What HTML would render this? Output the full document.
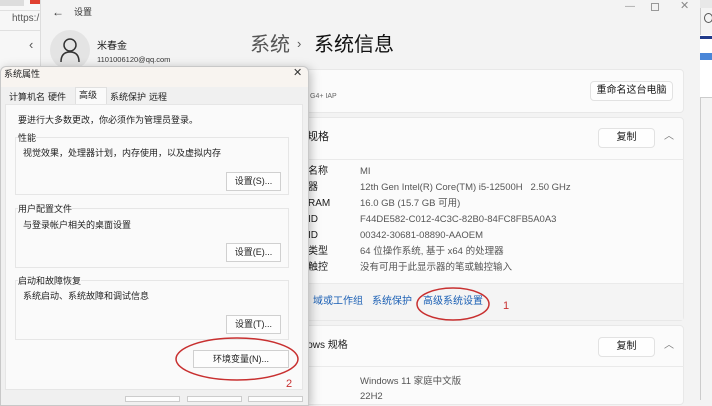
<!DOCTYPE html>
<html><head><meta charset="utf-8"><style>
*{margin:0;padding:0;box-sizing:border-box}
body{width:712px;height:400px;overflow:hidden;position:relative;background:#f3f3f3;font-family:"Liberation Sans","Noto Sans CJK SC",sans-serif;color:#1a1a1a;line-height:1.2}
.a{position:absolute;white-space:nowrap;line-height:1.2}
.card{position:absolute;background:#fbfbfb;border:1px solid #e8e8e8;border-radius:4px}
.btn{position:absolute;background:#fefefe;border:1px solid #e2e2e2;border-radius:4px;font-size:10px;text-align:center}
.lbl{font-size:10px;color:#1a1a1a}
.val{font-size:9.5px;color:#555}
.dbtn{position:absolute;background:#fdfdfd;border:1px solid #d0d0d0;font-size:9px;text-align:center;line-height:17px;color:#222}
.grp{position:absolute;border:1px solid #e6e6e6;background:#fafafa}
.t9{font-size:9px;color:#222}
</style></head><body>
<!-- left browser -->
<div class="a" style="left:0;top:0;width:42px;height:400px;background:#f7f7f7"></div>
<div class="a" style="left:0;top:0;width:24px;height:6px;background:#ddd"></div>
<div class="a" style="left:30px;top:0;width:10px;height:4px;background:#e04030"></div>
<div class="a" style="left:0;top:10px;width:42px;height:1px;background:#e0e0e0"></div>
<div class="a" style="left:12px;top:13px;font-size:10px;color:#555">https:/</div>
<div class="a" style="left:0;top:30px;width:42px;height:1px;background:#e0e0e0"></div>
<div class="a" style="left:29px;top:37px;font-size:13px;color:#555">‹</div>
<!-- settings window -->
<div class="a" style="left:40px;top:0;width:660px;height:400px;background:#f3f3f3;border-left:1px solid #ddd"></div>
<div class="a" style="left:52px;top:5px;font-size:12px;color:#333">←</div>
<div class="a" style="left:74px;top:7px;font-size:9px;color:#333">设置</div>
<div class="a" style="left:625px;top:1px;font-size:10px;color:#999">—</div>
<div class="a" style="left:651px;top:3px;width:8px;height:8px;border:1px solid #999"></div>
<div class="a" style="left:680px;top:0px;font-size:11px;color:#888">✕</div>
<div class="a" style="left:50px;top:30px;width:40px;height:40px;border-radius:50%;background:#e4e4e4"></div>
<svg class="a" style="left:60px;top:38px" width="20" height="24"><circle cx="10" cy="7" r="6" fill="none" stroke="#333" stroke-width="1.5"/><path d="M1 24 Q1 14 10 14 Q19 14 19 24" fill="none" stroke="#333" stroke-width="1.5"/></svg>
<div class="a" style="left:97px;top:41px;font-size:10px">米春金</div>
<div class="a" style="left:97px;top:55px;font-size:7.5px;color:#333">1101006120@qq.com</div>
<div class="a" style="left:250px;top:33px;font-size:20px;color:#555">系统</div>
<div class="a" style="left:297px;top:36px;font-size:13px;color:#555">›</div>
<div class="a" style="left:314px;top:33px;font-size:20px;color:#111">系统信息</div>
<div class="card" style="left:300px;top:69px;width:384px;height:44px"></div>
<div class="a" style="left:310px;top:93px;font-size:7px;color:#666">G4+ IAP</div>
<div class="btn" style="left:590px;top:81px;width:83px;height:20px;line-height:18px">重命名这台电脑</div>
<div class="card" style="left:300px;top:117px;width:384px;height:204px"></div>
<div class="a" style="left:300px;top:117px;width:384px;height:43px;border-bottom:1px solid #eaeaea"></div>
<div class="a" style="left:307px;top:131px;font-size:11px">规格</div>
<div class="btn" style="left:598px;top:128px;width:57px;height:20px;line-height:18px">复制</div>
<div class="a" style="left:664px;top:131px;font-size:10px;color:#777">︿</div>
<div class="a lbl" style="left:308px;top:166px">名称</div><div class="a val" style="left:360px;top:166px">MI</div>
<div class="a lbl" style="left:308px;top:182px">器</div><div class="a val" style="left:360px;top:182px">12th Gen Intel(R) Core(TM) i5-12500H &nbsp; 2.50 GHz</div>
<div class="a lbl" style="left:308px;top:198px">RAM</div><div class="a val" style="left:360px;top:198px">16.0 GB (15.7 GB 可用)</div>
<div class="a lbl" style="left:308px;top:214px">ID</div><div class="a val" style="left:360px;top:214px">F44DE582-C012-4C3C-82B0-84FC8FB5A0A3</div>
<div class="a lbl" style="left:308px;top:230px">ID</div><div class="a val" style="left:360px;top:230px">00342-30681-08890-AAOEM</div>
<div class="a lbl" style="left:308px;top:246px">类型</div><div class="a val" style="left:360px;top:246px">64 位操作系统, 基于 x64 的处理器</div>
<div class="a lbl" style="left:308px;top:262px">触控</div><div class="a val" style="left:360px;top:262px">没有可用于此显示器的笔或触控输入</div>
<div class="a" style="left:301px;top:283px;width:382px;height:37px;background:#f4f4f4;border-top:1px solid #eaeaea"></div>
<div class="a" style="left:313px;top:296px;font-size:10px;color:#1a5fb4">域或工作组</div>
<div class="a" style="left:372px;top:296px;font-size:10px;color:#1a5fb4">系统保护</div>
<div class="a" style="left:423px;top:296px;font-size:10px;color:#1a5fb4">高级系统设置</div>
<svg class="a" style="left:415px;top:284px" width="80" height="40"><ellipse cx="38" cy="20" rx="36" ry="16" fill="none" stroke="#c83030" stroke-width="1.5"/></svg>
<div class="a" style="left:503px;top:300px;font-size:11px;color:#c83030">1</div>
<div class="card" style="left:300px;top:325px;width:384px;height:80px"></div>
<div class="a" style="left:300px;top:325px;width:384px;height:42px;border-bottom:1px solid #eaeaea"></div>
<div class="a" style="left:305px;top:340px;font-size:10px">lows 规格</div>
<div class="btn" style="left:598px;top:337px;width:57px;height:20px;line-height:18px">复制</div>
<div class="a" style="left:664px;top:340px;font-size:10px;color:#777">︿</div>
<div class="a val" style="left:360px;top:376px">Windows 11 家庭中文版</div>
<div class="a val" style="left:360px;top:391px">22H2</div>
<!-- right strip -->
<div class="a" style="left:700px;top:0;width:12px;height:400px;background:#f4f4f4;border-left:1px solid #ccc"></div>
<div class="a" style="left:700px;top:0;width:12px;height:8px;background:#e8e8e8"></div>
<div class="a" style="left:704px;top:13px;width:9px;height:10px;border-radius:50%;border:1.5px solid #555"></div>
<div class="a" style="left:700px;top:35px;width:12px;height:62px;background:#fff"></div>
<div class="a" style="left:700px;top:36px;width:12px;height:3px;background:#203a8a"></div>
<div class="a" style="left:700px;top:53px;width:12px;height:7px;background:#4a86d8"></div>
<div class="a" style="left:700px;top:97px;width:12px;height:1px;background:#ccc"></div>
<!-- dialog -->
<div class="a" style="left:0;top:66px;width:309px;height:340px;background:#f0f0f0;border:1px solid #c8c8c8;border-radius:6px 6px 0 0;box-shadow:2px 2px 10px rgba(0,0,0,.25)"></div>
<div class="a" style="left:1px;top:67px;width:307px;height:20px;background:#f8f4f0;border-radius:6px 6px 0 0"></div>
<div class="a" style="left:4px;top:69px;font-size:9px;color:#222">系统属性</div>
<div class="a" style="left:293px;top:67px;font-size:11px;color:#333">✕</div>
<div class="a t9" style="left:9px;top:92px">计算机名</div>
<div class="a t9" style="left:48px;top:92px">硬件</div>
<div class="a" style="left:75px;top:87px;width:32px;height:18px;background:#fafafa;border:1px solid #e0e0e0;border-bottom:none"></div>
<div class="a t9" style="left:79px;top:90px">高级</div>
<div class="a t9" style="left:110px;top:92px">系统保护</div>
<div class="a t9" style="left:149px;top:92px">远程</div>
<div class="a" style="left:5px;top:104px;width:298px;height:286px;background:#fafafa;border:1px solid #e6e6e6"></div>
<div class="a t9" style="left:18px;top:115px">要进行大多数更改，你必须作为管理员登录。</div>
<div class="grp" style="left:15px;top:137px;width:274px;height:58px"></div>
<div class="a t9" style="left:18px;top:133px;background:#fafafa">性能</div>
<div class="a t9" style="left:23px;top:148px">视觉效果，处理器计划，内存使用，以及虚拟内存</div>
<div class="dbtn" style="left:226px;top:172px;width:55px;height:19px">设置(S)...</div>
<div class="grp" style="left:15px;top:208px;width:274px;height:60px"></div>
<div class="a t9" style="left:18px;top:204px;background:#fafafa">用户配置文件</div>
<div class="a t9" style="left:23px;top:220px">与登录帐户相关的桌面设置</div>
<div class="dbtn" style="left:226px;top:243px;width:55px;height:19px">设置(E)...</div>
<div class="grp" style="left:15px;top:280px;width:274px;height:60px"></div>
<div class="a t9" style="left:18px;top:276px;background:#fafafa">启动和故障恢复</div>
<div class="a t9" style="left:23px;top:291px">系统启动、系统故障和调试信息</div>
<div class="dbtn" style="left:226px;top:315px;width:55px;height:19px">设置(T)...</div>
<div class="dbtn" style="left:193px;top:350px;width:96px;height:18px">环境变量(N)...</div>
<svg class="a" style="left:172px;top:334px" width="130" height="50"><ellipse cx="65" cy="25" rx="61" ry="21" fill="none" stroke="#c83030" stroke-width="1.5"/></svg>
<div class="a" style="left:286px;top:378px;font-size:11px;color:#c83030">2</div>
<div class="a" style="left:125px;top:396px;width:55px;height:6px;background:#fdfdfd;border:1px solid #ccc"></div>
<div class="a" style="left:187px;top:396px;width:55px;height:6px;background:#fdfdfd;border:1px solid #ccc"></div>
<div class="a" style="left:248px;top:396px;width:55px;height:6px;background:#fdfdfd;border:1px solid #ccc"></div>
</body></html>
